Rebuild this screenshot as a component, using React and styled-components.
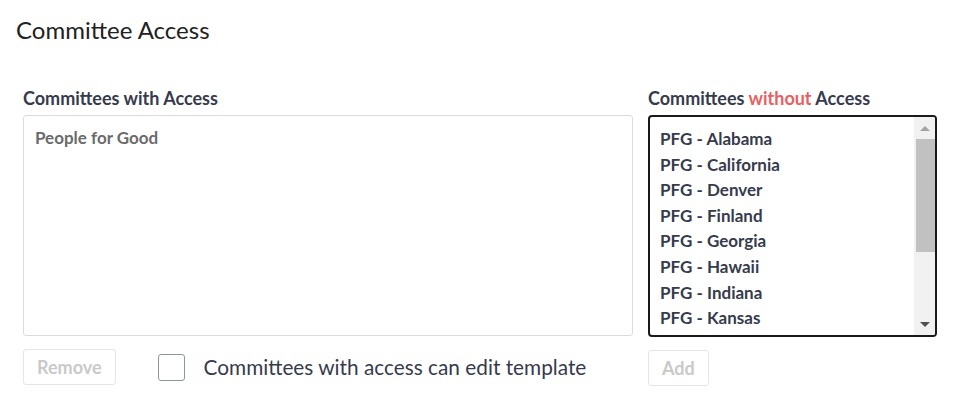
import styled, { createGlobalStyle } from 'styled-components'

const GlobalStyle = createGlobalStyle`
  body {
    margin: 0;
    background: #ffffff;
    font-family: Lato, 'Open Sans', sans-serif;
  }
`

const committeesWithout = [
  'PFG - Alabama',
  'PFG - California',
  'PFG - Denver',
  'PFG - Finland',
  'PFG - Georgia',
  'PFG - Hawaii',
  'PFG - Indiana',
  'PFG - Kansas',
]

const App = () => {
  return (
    <Root>
      <GlobalStyle />
      <Title>Committee Access</Title>
      <Columns>
        <LeftColumn>
          <Label>Committees with Access</Label>
          <AccessBox>
            <AccessItem>People for Good</AccessItem>
          </AccessBox>
          <Actions>
            <GhostBtn disabled>Remove</GhostBtn>
            <CheckRow>
              <CheckBox />
              <CheckText>Committees with access can edit template</CheckText>
            </CheckRow>
          </Actions>
        </LeftColumn>
        <RightColumn>
          <Label>
            Committees <Danger>without</Danger> Access
          </Label>
          <ListBox>
            <Items>
              {committeesWithout.map((name) => (
                <ListItem key={name}>{name}</ListItem>
              ))}
            </Items>
            <Scrollbar>
              <ScrollBtn>
                <Arrow up />
              </ScrollBtn>
              <Thumb />
              <TrackRest />
              <ScrollBtn>
                <Arrow />
              </ScrollBtn>
            </Scrollbar>
          </ListBox>
          <Actions>
            <GhostBtn disabled>Add</GhostBtn>
          </Actions>
        </RightColumn>
      </Columns>
    </Root>
  )
}

const Root = styled.div`
  display: flex;
  flex-direction: column;
  width: 964px;
  height: 403px;
  padding: 15px 0 0 16px;
  box-sizing: border-box;
`
const Title = styled.h1`
  margin: 0;
  font-size: 24px;
  font-weight: 400;
  line-height: 30px;
  color: #222222;
`
const Columns = styled.div`
  display: flex;
  gap: 15px;
  margin-top: 42px;
  padding-left: 7px;
`
const LeftColumn = styled.div`
  display: flex;
  flex-direction: column;
  width: 610px;
`
const RightColumn = styled.div`
  display: flex;
  flex-direction: column;
  width: 289px;
`
const Label = styled.div`
  font-size: 18px;
  font-weight: 700;
  line-height: 22px;
  color: #363b4d;
  margin-bottom: 6px;
`
const Danger = styled.span`
  color: #e8605f;
`
const AccessBox = styled.div`
  height: 221px;
  border: 1px solid #dcdcdc;
  border-radius: 3px;
  padding: 12px 11px;
  box-sizing: border-box;
`
const AccessItem = styled.div`
  font-size: 17px;
  font-weight: 700;
  line-height: 20px;
  color: #6b6b6b;
`
const ListBox = styled.div`
  display: flex;
  height: 222px;
  border: 2px solid #1a1a1a;
  border-radius: 4px;
  box-sizing: border-box;
  overflow: hidden;
`
const Items = styled.div`
  flex: 1;
  padding: 9px 10px 0;
  overflow: hidden;
`
const ListItem = styled.div`
  font-size: 17px;
  font-weight: 700;
  line-height: 25.6px;
  color: #363b4d;
  white-space: nowrap;
`
const Scrollbar = styled.div`
  display: flex;
  flex-direction: column;
  width: 21px;
  background: #f1f1f1;
`
const ScrollBtn = styled.div`
  display: flex;
  align-items: center;
  justify-content: center;
  height: 22px;
`
const Arrow = styled.div`
  width: 0;
  height: 0;
  border-left: 5px solid transparent;
  border-right: 5px solid transparent;
  ${({ up }) =>
    up
      ? 'border-bottom: 5px solid #a3a3a3;'
      : 'border-top: 5px solid #505050;'}
`
const Thumb = styled.div`
  height: 113px;
  margin: 0 0 0 2px;
  background: #c1c1c1;
`
const TrackRest = styled.div`
  flex: 1;
`
const Actions = styled.div`
  display: flex;
  align-items: center;
  margin-top: 13px;
`
const GhostBtn = styled.button`
  height: 36px;
  padding: 0 13px;
  border: 1px solid #e6e6e6;
  border-radius: 3px;
  background: #ffffff;
  font-family: Lato, sans-serif;
  font-size: 18px;
  font-weight: 700;
  line-height: 22px;
  color: #c9c9c9;
`
const CheckRow = styled.label`
  display: flex;
  align-items: center;
  gap: 19px;
  margin-left: 42px;
`
const CheckBox = styled.span`
  flex-shrink: 0;
  width: 27px;
  height: 27px;
  border: 1px solid #8d94a6;
  border-radius: 3px;
  box-sizing: border-box;
`
const CheckText = styled.span`
  font-size: 20.8px;
  font-weight: 400;
  line-height: 26px;
  color: #363b4d;
  white-space: nowrap;
`

export default App
